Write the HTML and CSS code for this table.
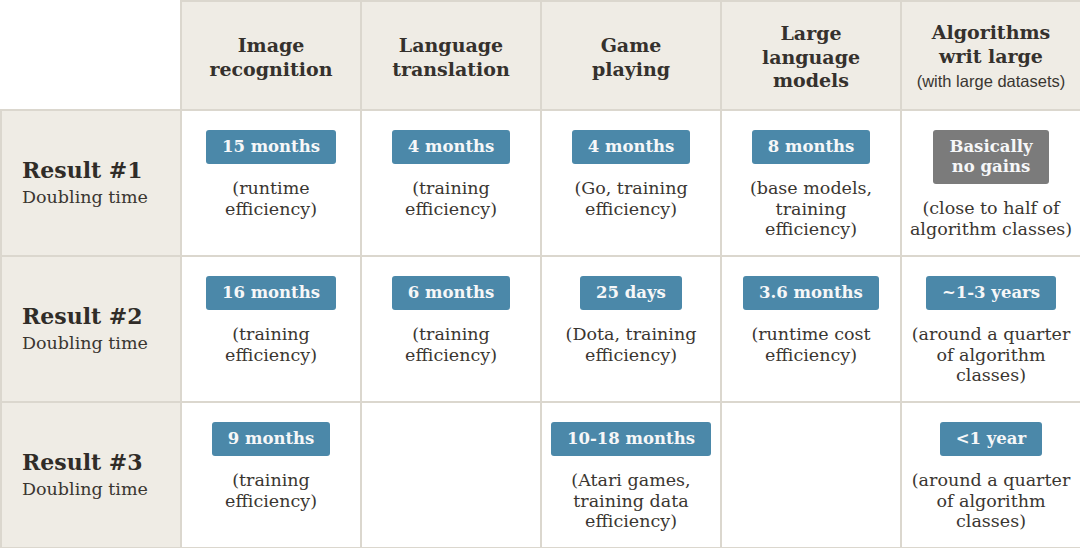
FILE: index.html
```html
<!DOCTYPE html>
<html>
<head>
<meta charset="utf-8">
<link rel="stylesheet" href="styles.css">
</head>
<body>
<table class="grid">
  <colgroup>
    <col class="c"><col class="c"><col class="c"><col class="c"><col class="c"><col class="c">
  </colgroup>
  <thead>
    <tr class="head-row">
      <th class="corner"></th>
      <th class="head">Image<br>recognition</th>
      <th class="head">Language<br>translation</th>
      <th class="head">Game<br>playing</th>
      <th class="head">Large<br>language<br>models</th>
      <th class="head">Algorithms<br>writ large<span class="sub">(with large datasets)</span></th>
    </tr>
  </thead>
  <tbody>
    <tr class="row">
      <th class="label"><span class="lt">Result #1</span><span class="ls">Doubling time</span></th>
      <td class="cell"><span class="badge">15 months</span><p class="desc">(runtime<br>efficiency)</p></td>
      <td class="cell"><span class="badge">4 months</span><p class="desc">(training<br>efficiency)</p></td>
      <td class="cell"><span class="badge">4 months</span><p class="desc">(Go, training<br>efficiency)</p></td>
      <td class="cell"><span class="badge">8 months</span><p class="desc">(base models,<br>training<br>efficiency)</p></td>
      <td class="cell"><span class="badge gray">Basically<br>no gains</span><p class="desc">(close to half of<br>algorithm classes)</p></td>
    </tr>
    <tr class="row">
      <th class="label"><span class="lt">Result #2</span><span class="ls">Doubling time</span></th>
      <td class="cell"><span class="badge">16 months</span><p class="desc">(training<br>efficiency)</p></td>
      <td class="cell"><span class="badge">6 months</span><p class="desc">(training<br>efficiency)</p></td>
      <td class="cell"><span class="badge">25 days</span><p class="desc">(Dota, training<br>efficiency)</p></td>
      <td class="cell"><span class="badge">3.6 months</span><p class="desc">(runtime cost<br>efficiency)</p></td>
      <td class="cell"><span class="badge">~1-3 years</span><p class="desc">(around a quarter<br>of algorithm<br>classes)</p></td>
    </tr>
    <tr class="row">
      <th class="label"><span class="lt">Result #3</span><span class="ls">Doubling time</span></th>
      <td class="cell"><span class="badge">9 months</span><p class="desc">(training<br>efficiency)</p></td>
      <td class="cell"></td>
      <td class="cell"><span class="badge">10-18 months</span><p class="desc">(Atari games,<br>training data<br>efficiency)</p></td>
      <td class="cell"></td>
      <td class="cell"><span class="badge">&lt;1 year</span><p class="desc">(around a quarter<br>of algorithm<br>classes)</p></td>
    </tr>
  </tbody>
</table>
</body>
</html>
```

FILE: styles.css
```css
html, body {
  margin: 0;
  padding: 0;
  background: #ffffff;
}
body {
  font-family: "DejaVu Serif", "Liberation Serif", serif;
  color: #3a3631;
}
.grid {
  width: 1080px;
  table-layout: fixed;
  border-collapse: collapse;
}
.c { width: 180px; }
.head-row { height: 109px; }
.row { height: 146px; }
.corner {
  border: none;
  background: #ffffff;
}
.head, .label, .cell {
  border: 2px solid #dbd7ce;
}
.head {
  background: #efece5;
  font-weight: bold;
  font-size: 19px;
  line-height: 23.5px;
  text-align: center;
  vertical-align: middle;
  padding: 4px 4px 0;
  color: #35312d;
}
.sub {
  display: block;
  font-family: "Liberation Sans", Arial, sans-serif;
  font-weight: normal;
  font-size: 16.5px;
  line-height: 26px;
  color: #3a3631;
}
.label {
  background: #efece5;
  text-align: left;
  vertical-align: middle;
  padding: 0 0 0 20px;
}
.lt {
  display: block;
  font-weight: bold;
  font-size: 22px;
  line-height: 28px;
  color: #302c28;
}
.ls {
  display: block;
  font-weight: normal;
  font-size: 17.5px;
  line-height: 26px;
  color: #3a3631;
}
.cell {
  background: #ffffff;
  vertical-align: top;
  text-align: center;
  padding: 19px 2px 0;
}
.badge {
  display: inline-block;
  background: #4b88a9;
  color: #f6f7f8;
  font-weight: bold;
  font-size: 16.5px;
  line-height: 20px;
  padding: 7px 16px;
  border-radius: 3px;
}
.badge.gray {
  background: #7b7b7b;
}
.desc {
  margin: 14px 0 0;
  font-size: 17.5px;
  line-height: 20.5px;
  color: #3a3631;
}
```
